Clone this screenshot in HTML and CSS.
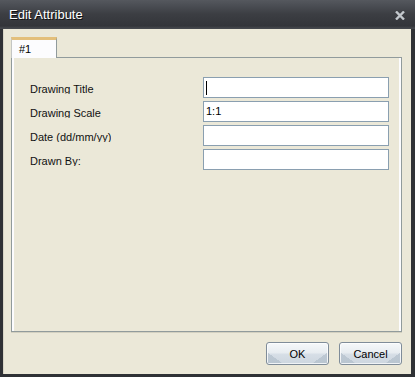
FILE: index.html
```html
<!DOCTYPE html>
<html>
<head>
<meta charset="utf-8">
<link rel="stylesheet" href="styles.css">
</head>
<body>
<div class="window">
  <div class="titlebar">
    <span class="title">Edit Attribute</span>
    <svg class="close" width="10" height="9" viewBox="0 0 10 9"><path d="M1 0.5 L9 8.5 M9 0.5 L1 8.5" stroke="#c3c8cd" stroke-width="2.4" fill="none"/></svg>
  </div>
  <div class="content">
    <div class="tabs">
      <div class="tab">#1</div>
    </div>
    <div class="panel">
      <div class="form">
        <div class="label"><span>Drawing Title</span></div>
        <div class="field"><span class="caret"></span></div>
        <div class="label"><span>Drawing Scale</span></div>
        <div class="field">1:1</div>
        <div class="label"><span>Date (dd/mm/yy)</span></div>
        <div class="field"></div>
        <div class="label"><span>Drawn By:</span></div>
        <div class="field"></div>
      </div>
    </div>
    <div class="buttons">
      <div class="btn">OK</div>
      <div class="btn">Cancel</div>
    </div>
  </div>
</div>
</body>
</html>
```
FILE: styles.css
```css
html, body {
  margin: 0;
  padding: 0;
}
body {
  font-family: "Liberation Sans", Arial, sans-serif;
  background: #2f3135;
}
.window {
  width: 415px;
  height: 377px;
  display: flex;
  flex-direction: column;
  background: #2f3135;
  box-sizing: border-box;
}
.titlebar {
  height: 29px;
  flex: none;
  display: flex;
  align-items: center;
  justify-content: space-between;
  padding: 0 10px 0 9px;
  box-sizing: border-box;
  background: linear-gradient(#55585e 0px, #4a4d53 6px, #3c3e43 14px, #33353a 26px, #44474c 28px);
}
.title {
  color: #ffffff;
  font-size: 13px;
  text-shadow: 1px 1px 0 #111;
}
.close {
  display: block;
  margin-top: 1px;
}
.content {
  flex: 1;
  margin: 0 4px 3px 3px;
  background: #ebe8d8;
  padding: 8px 9px 0 8px;
  display: flex;
  flex-direction: column;
  box-shadow: inset 1px 0 0 #d8d5c6;
}
.tabs {
  display: flex;
  height: 21px;
  position: relative;
  z-index: 1;
}
.tab {
  width: 46px;
  box-sizing: border-box;
  border-top: 3px solid #e3bf7b;
  border-left: 1px solid #c4c6c4;
  border-right: 1px solid #919b9c;
  background: #fcfcfe;
  font-size: 11px;
  padding-left: 7px;
  padding-top: 3px;
  color: #000;
}
.panel {
  margin-top: -1px;
  width: 391px;
  height: 275px;
  box-sizing: border-box;
  border: 1px solid #919b9c;
  background: #ebe8d8;
  box-shadow: inset 2px 0 0 #fcfcfe, inset -2px 0 0 #fcfcfe, 0 1px 0 #d3d0c0;
  padding: 19px 12px 0 18px;
}
.form {
  display: grid;
  grid-template-columns: 173px 186px;
  grid-auto-rows: 21px;
  row-gap: 3px;
}
.label {
  font-size: 11px;
  color: #111;
  display: flex;
  align-items: center;
}
.label span {
  display: block;
  height: 11px;
  line-height: 13px;
  overflow: hidden;
  margin-top: 1px;
}
.field {
  box-sizing: border-box;
  border: 1px solid #8a9fb0;
  background: #fff;
  font-size: 11px;
  line-height: 19px;
  padding-left: 2px;
  display: flex;
  align-items: center;
}
.caret {
  display: block;
  width: 1px;
  height: 14px;
  background: #000;
}
.buttons {
  display: flex;
  justify-content: flex-end;
  gap: 10px;
  margin-top: 10px;
}
.btn {
  width: 63px;
  height: 23px;
  box-sizing: border-box;
  border: 1px solid #7f8c99;
  border-radius: 3px;
  background: linear-gradient(#f6f8fa 0%, #e8edf1 45%, #d6dee6 55%, #cdd6df 100%);
  box-shadow: inset 0 0 0 1px rgba(255,255,255,0.7);
  font-size: 11px;
  color: #000;
  display: flex;
  align-items: center;
  justify-content: center;
  position: relative;
  overflow: hidden;
}
.btn::before,
.btn::after {
  content: "";
  position: absolute;
  bottom: 1px;
  width: 14px;
  height: 10px;
}
.btn::before {
  left: 1px;
  background: linear-gradient(to top right, #a9b7c4 50%, transparent 51%);
  opacity: 0.55;
}
.btn::after {
  right: 1px;
  background: linear-gradient(to top left, #a9b7c4 50%, transparent 51%);
  opacity: 0.55;
}
```
